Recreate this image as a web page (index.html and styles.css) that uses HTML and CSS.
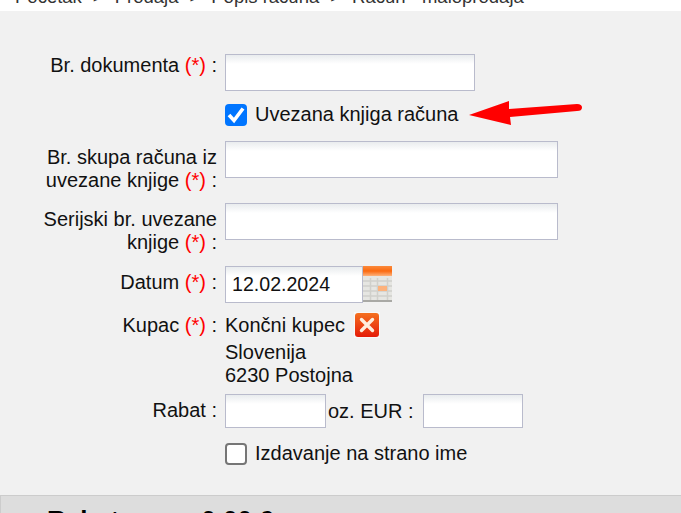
FILE: index.html
```html
<!DOCTYPE html>
<html lang="sl">
<head>
    <meta charset="UTF-8">
    <title>Račun - maloprodaja</title>
    <link rel="stylesheet" href="styles.css">
</head>
<body>
    <div class="crumbs">
        <span>Početak</span><span class="sep">&gt;</span><span>Prodaja</span><span class="sep">&gt;</span><span>Popis računa</span><span class="sep">&gt;</span><span>Račun - maloprodaja</span>
    </div>
    <div class="panel">
        <form class="form">
            <div class="row row-doc">
                <label class="lbl">Br. dokumenta <span class="req">(*)</span> :</label>
                <div class="field"><input class="txt w250" type="text"></div>
            </div>
            <div class="row row-check1">
                <div class="lbl"></div>
                <div class="field check">
                    <input class="box" type="checkbox" checked>
                    <span>Uvezana knjiga računa</span>
                    <svg class="arrow" width="114" height="26" viewBox="0 0 114 26">
                        <path d="M0 15 L40 1 L40 9 L108 4 Q113 4 113 7.5 Q113 11 108 11 L41 17 L42 25 Z" fill="#f00"/>
                    </svg>
                </div>
            </div>
            <div class="row row-skup">
                <label class="lbl">Br. skupa računa iz<br>uvezane knjige <span class="req">(*)</span> :</label>
                <div class="field"><input class="txt w333" type="text"></div>
            </div>
            <div class="row row-ser">
                <label class="lbl">Serijski br. uvezane<br>knjige <span class="req">(*)</span> :</label>
                <div class="field"><input class="txt w333" type="text"></div>
            </div>
            <div class="row row-date">
                <label class="lbl">Datum <span class="req">(*)</span> :</label>
                <div class="field date">
                    <input class="txt w138" type="text" value="12.02.2024">
                    <svg class="cal" width="29" height="36" viewBox="0 0 29 36">
                        <defs>
                            <linearGradient id="calTop" x1="0" y1="0" x2="0" y2="1">
                                <stop offset="0" stop-color="#fb8a3c"/>
                                <stop offset="0.5" stop-color="#fb6a10"/>
                                <stop offset="1" stop-color="#fdb27c"/>
                            </linearGradient>
                        </defs>
                        <rect width="29" height="36" fill="#e6e6e2"/>
                        <rect width="29" height="10" fill="url(#calTop)"/>
                        <path d="M0 15H29M0 20H29M0 25H29M0 30H29M7.5 12V34M14.5 12V34M24.5 12V34" stroke="#d0d0cb" stroke-width="1.5" fill="none"/>
                        <rect x="15" y="20" width="9" height="5" fill="#fdb27c"/>
                        <rect y="34" width="29" height="2" fill="#a9a9a5"/>
                    </svg>
                </div>
            </div>
            <div class="row row-kupac">
                <label class="lbl">Kupac <span class="req">(*)</span> :</label>
                <div class="field kupac">
                    <div class="kupac-name">
                        <span>Končni kupec</span>
                        <svg class="del" width="26" height="26" viewBox="0 0 26 26">
                            <defs>
                                <linearGradient id="delBg" x1="0" y1="0" x2="0" y2="1">
                                    <stop offset="0" stop-color="#f4701f"/>
                                    <stop offset="1" stop-color="#e51c08"/>
                                </linearGradient>
                            </defs>
                            <rect width="26" height="26" fill="#f8f8f8"/>
                            <rect x="1" y="1" width="24" height="24" rx="3" fill="url(#delBg)"/>
                            <path d="M7.5 7.5L18.5 18.5M18.5 7.5L7.5 18.5" stroke="#ffeedd" stroke-width="3.4" stroke-linecap="round"/>
                        </svg>
                    </div>
                    <div>Slovenija</div>
                    <div>6230 Postojna</div>
                </div>
            </div>
            <div class="row row-rabat">
                <label class="lbl">Rabat :</label>
                <div class="field rabat">
                    <input class="txt w101" type="text">
                    <span>oz. EUR :</span>
                    <input class="txt w100" type="text">
                </div>
            </div>
            <div class="row row-check2">
                <div class="lbl"></div>
                <div class="field check">
                    <input class="box" type="checkbox">
                    <span>Izdavanje na strano ime</span>
                </div>
            </div>
        </form>
    </div>
    <div class="total">
        <b>Rabat</b><b class="total-val">0,00 €</b>
    </div>
</body>
</html>
```

FILE: styles.css
```css
*{
    margin: 0;
    padding: 0;
    box-sizing: border-box;
}
html, body{
    height: 513px;
    overflow: hidden;
}
body{
    background: #fff;
    font-family: "Liberation Sans", Arial, sans-serif;
    font-size: 20px;
    line-height: 23px;
    color: #111;
}
.crumbs{
    height: 11px;
    overflow: hidden;
    display: flex;
    align-items: flex-end;
    padding: 0 0 5px 15px;
    font-size: 18.5px;
    line-height: 18px;
    color: #333;
    white-space: nowrap;
}
.crumbs span{
    flex: none;
}
.crumbs .sep{
    margin: 0 11px;
}
.panel{
    height: 484px;
    background: #f1f1f1;
    padding-top: 43px;
}
.row{
    display: grid;
    grid-template-columns: 217px 1fr;
    column-gap: 8px;
}
.lbl{
    text-align: right;
}
.req{
    color: #f00;
}
.txt{
    display: block;
    height: 37px;
    border: 1px solid #b9bbcc;
    background: linear-gradient(#e9ecee, #fff 9px);
    font: inherit;
    color: #111;
    padding: 0 6px;
    outline: none;
}
.w250{ width: 250px; }
.w333{ width: 333px; }
.w138{ width: 138px; font-size: 19.6px; }
.w101{ width: 101px; height: 34px; }
.w100{ width: 100px; height: 34px; }
.check{
    display: flex;
    align-items: center;
    gap: 8px;
    height: 23px;
    position: relative;
}
.box{
    appearance: none;
    width: 22px;
    height: 22px;
    flex: none;
    background: #fff;
    border: 2px solid #767676;
    border-radius: 4px;
}
.box:checked{
    border: 0;
    background: #0075ff url("data:image/svg+xml,%3Csvg xmlns='http://www.w3.org/2000/svg' viewBox='0 0 22 22'%3E%3Cpath d='M4 11L9 16.5L18 4.5' fill='none' stroke='white' stroke-width='3.6'/%3E%3C/svg%3E");
}
.arrow{
    position: absolute;
    left: 244px;
    top: -3px;
}
.row-check1{
    margin-top: 12px;
}
.row-skup{
    margin-top: 15px;
}
.row-skup .lbl, .row-ser .lbl, .row-date .lbl, .row-rabat .lbl{
    padding-top: 5px;
}
.row-ser{
    margin-top: 11px;
}
.row-date{
    margin-top: 12px;
}
.date{
    display: flex;
}
.row-kupac{
    margin-top: 9px;
}
.row-kupac .lbl{
    padding-top: 2px;
}
.kupac-name{
    display: flex;
    align-items: center;
    gap: 9px;
    height: 26px;
    margin-bottom: 3px;
}
.row-rabat{
    margin-top: 7px;
}
.rabat{
    display: flex;
    align-items: center;
}
.rabat span{
    margin: 0 9px 0 2px;
}
.row-check2{
    margin-top: 14px;
}
.total{
    height: 18px;
    background: #ddd;
    border-top: 1px solid #ccc;
    border-left: 1px solid #ccc;
    padding: 9px 0 0 46px;
    font-size: 26px;
    line-height: 30px;
    overflow: hidden;
    color: #000;
}
.total-val{
    margin-left: 82px;
}
```
